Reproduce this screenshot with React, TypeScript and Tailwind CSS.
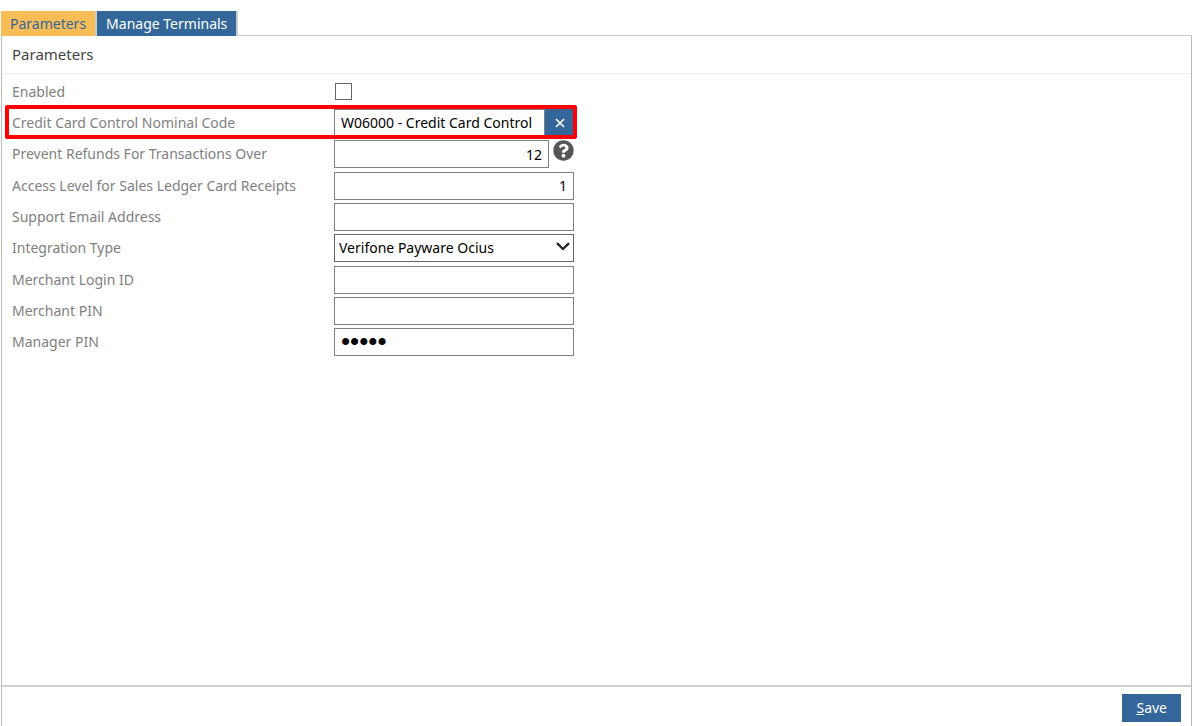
import { useState } from "react";
import { FaQuestionCircle } from "react-icons/fa";
import clsx from "clsx";

const TABS = ["Parameters", "Manage Terminals"];

const INTEGRATION_TYPES = ["Verifone Payware Ocius", "None"];

const inputClass =
  "h-7 w-full border border-[#808080] bg-white px-1.5 text-black outline-none focus:border-[#336699]";

// Liberation Sans gives the larger, rounder password dots
const passwordClass = "font-['Liberation_Sans',sans-serif] text-[26px]";

interface FieldRowProps {
  id: string;
  label: string;
  tall?: boolean;
  highlighted?: boolean;
  children: React.ReactNode;
}

function FieldRow({ id, label, tall, highlighted, children }: FieldRowProps) {
  return (
    <div
      className={clsx(
        "relative flex w-fit items-center",
        tall ? "h-8" : "h-[31px]"
      )}
    >
      <label htmlFor={id} className="w-[322px] shrink-0 text-[#808080]">
        {label}
      </label>
      <div className="flex w-60 items-center">{children}</div>
      {highlighted && (
        <div className="pointer-events-none absolute -bottom-px -left-[7px] -right-[3px] -top-0.5 rounded-xs border-4 border-[#ff0000]" />
      )}
    </div>
  );
}

export default function App() {
  const [activeTab, setActiveTab] = useState("Parameters");
  const [nominalCode, setNominalCode] = useState(
    "W06000 - Credit Card Control"
  );

  return (
    <div className="flex h-screen flex-col bg-white pl-px pr-[5px] pt-[11px] font-['Noto_Sans',sans-serif] text-[14px] leading-5">
      {/* Tabs */}
      <div role="tablist" className="flex border-b border-[#c8c8c8]">
        {TABS.map((tab) => (
          <button
            key={tab}
            type="button"
            role="tab"
            aria-selected={activeTab === tab}
            onClick={() => setActiveTab(tab)}
            className={clsx(
              "-mb-px h-[25px] border-r-2 border-[#cccccc] px-[9px]",
              activeTab === tab
                ? "bg-[#f8bd57] text-[#336699]"
                : "bg-[#336699] text-white"
            )}
          >
            {tab}
          </button>
        ))}
      </div>

      <form
        className="flex flex-1 flex-col border-x border-[#bbbbbb]"
        onSubmit={(e) => e.preventDefault()}
      >
        <h1 className="h-[38px] border-b border-[#ececec] px-2.5 text-[15px] leading-9 text-[#444444]">
          Parameters
        </h1>

        {/* Fields */}
        <div className="flex-1 px-2.5 pt-0.5">
          <FieldRow id="enabled" label="Enabled">
            <input
              id="enabled"
              type="checkbox"
              className="ml-px size-[17px] appearance-none border border-[#666666] bg-white checked:bg-[#336699]"
            />
          </FieldRow>

          <FieldRow
            id="nominal-code"
            label="Credit Card Control Nominal Code"
            highlighted
          >
            <input
              id="nominal-code"
              type="text"
              value={nominalCode}
              onChange={(e) => setNominalCode(e.target.value)}
              className={inputClass}
            />
            <button
              type="button"
              aria-label="Clear nominal code"
              onClick={() => setNominalCode("")}
              className="flex h-7 w-[29px] shrink-0 items-center justify-center bg-[#336699] text-white"
            >
              <svg viewBox="0 0 10 10" className="size-2.5">
                <path
                  d="M1 1l8 8M9 1l-8 8"
                  stroke="currentColor"
                  strokeWidth="1.7"
                />
              </svg>
            </button>
          </FieldRow>

          <FieldRow
            id="refund-limit"
            label="Prevent Refunds For Transactions Over"
            tall
          >
            <input
              id="refund-limit"
              type="text"
              defaultValue="12"
              className={clsx(inputClass, "text-right")}
            />
            <button
              type="button"
              aria-label="Help"
              className="ml-1 shrink-0 self-start text-[#555555]"
            >
              <FaQuestionCircle className="size-[21px]" />
            </button>
          </FieldRow>

          <FieldRow
            id="access-level"
            label="Access Level for Sales Ledger Card Receipts"
          >
            <input
              id="access-level"
              type="text"
              defaultValue="1"
              className={clsx(inputClass, "text-right")}
            />
          </FieldRow>

          <FieldRow id="support-email" label="Support Email Address">
            <input id="support-email" type="email" className={inputClass} />
          </FieldRow>

          <FieldRow id="integration-type" label="Integration Type" tall>
            <div className="relative w-full">
              <select
                id="integration-type"
                className="block h-7 w-full appearance-none border border-[#666666] bg-white px-1 text-black outline-none"
              >
                {INTEGRATION_TYPES.map((type) => (
                  <option key={type}>{type}</option>
                ))}
              </select>
              <svg
                viewBox="0 0 14 9"
                className="pointer-events-none absolute right-1 top-2 h-[9px] w-3.5"
              >
                <path
                  d="M1 1.2l6 5.8 6-5.8"
                  fill="none"
                  stroke="#222222"
                  strokeWidth="2.3"
                />
              </svg>
            </div>
          </FieldRow>

          <FieldRow id="merchant-login" label="Merchant Login ID">
            <input id="merchant-login" type="text" className={inputClass} />
          </FieldRow>

          <FieldRow id="merchant-pin" label="Merchant PIN">
            <input
              id="merchant-pin"
              type="password"
              className={clsx(inputClass, passwordClass)}
            />
          </FieldRow>

          <FieldRow id="manager-pin" label="Manager PIN">
            <input
              id="manager-pin"
              type="password"
              defaultValue="12345"
              className={clsx(inputClass, passwordClass)}
            />
          </FieldRow>
        </div>

        {/* Footer */}
        <div className="flex h-[41px] justify-end border-t-2 border-[#d0d0d0] px-2.5 pt-[7px]">
          <button
            type="submit"
            className="h-7 bg-[#336699] px-3.5 text-white"
          >
            <span className="underline">S</span>ave
          </button>
        </div>
      </form>
    </div>
  );
}
